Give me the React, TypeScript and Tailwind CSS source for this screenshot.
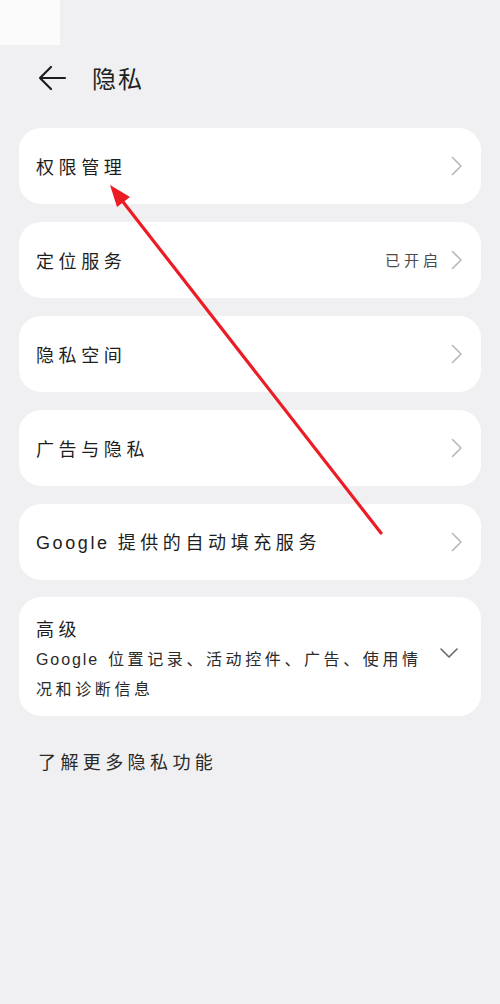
import React from "react";

const font = { fontFamily: '"Noto Sans CJK SC", "Noto Sans", sans-serif' };

function Chevron() {
  return (
    <svg width="13" height="20" viewBox="0 0 13 20" className="shrink-0">
      <path d="M2.5 1.5 L11 10 L2.5 18.5" fill="none" stroke="#b8b8b8" strokeWidth="1.6" strokeLinecap="round" strokeLinejoin="round" />
    </svg>
  );
}

function Row({ children, right }: { children: React.ReactNode; right?: React.ReactNode }) {
  return (
    <div className="h-[76px] bg-white rounded-[22px] flex items-center pl-[17px] pr-[18px]">
      <div className="flex-1 text-[18px] leading-[24px] tracking-[4.6px] text-[#1e1e1e] whitespace-nowrap">{children}</div>
      {right}
      <Chevron />
    </div>
  );
}

function G({ size }: { size: "lg" | "sm" }) {
  return (
    <span
      className={size === "lg" ? "tracking-[2.6px] mr-[8px]" : "tracking-[1.9px] mr-[9px]"}
      style={{ fontFamily: '"Liberation Sans", Arial, sans-serif' }}
    >
      Google
    </span>
  );
}

export default function App() {
  return (
    <div className="relative w-[500px] h-[1004px] bg-[#f0f0f2] overflow-hidden" style={font}>
      <div className="h-[45px]">
        <div className="w-[60px] h-[45px] bg-[#fbfbfb]" />
      </div>
      <div className="h-[83px] flex items-start pt-[13px]">
        <div className="h-[40px] flex items-center pl-[37px]">
          <svg width="30" height="28" viewBox="0 0 30 28">
            <path d="M28 14 H3 M14 3 L3 14 L14 25" fill="none" stroke="#1e1e1e" strokeWidth="2.2" strokeLinecap="round" strokeLinejoin="round" />
          </svg>
          <span className="ml-[25px] text-[24px] leading-[30px] tracking-[2px] text-[#1e1e1e]">隐私</span>
        </div>
      </div>

      <div className="mx-[19px] flex flex-col gap-[18px]">
        <Row>权限管理</Row>
        <Row right={<span className="text-[15px] tracking-[4px] text-[#4a4a4a] mr-[8px]">已开启</span>}>定位服务</Row>
        <Row>隐私空间</Row>
        <Row>广告与隐私</Row>
        <Row>
          <G size="lg" />
          提供的自动填充服务
        </Row>
        <div className="bg-white rounded-[22px] pl-[17px] pr-[22px] pt-[19px] pb-[14px] flex items-center -mt-[1px]">
          <div className="flex-1">
            <div className="text-[18px] leading-[24px] tracking-[4.6px] text-[#1e1e1e]">高级</div>
            <div className="mt-[4px] text-[16px] leading-[28px] tracking-[3.6px] text-[#2a2a2a] whitespace-nowrap">
              <div>
                <G size="sm" />
                位置记录、活动控件、广告、使用情
              </div>
              <div>况和诊断信息</div>
            </div>
          </div>
          <svg width="20" height="12" viewBox="0 0 20 12" className="shrink-0 -mt-[12px]">
            <path d="M2 2 L10 10 L18 2" fill="none" stroke="#666" strokeWidth="1.6" strokeLinecap="round" strokeLinejoin="round" />
          </svg>
        </div>
      </div>

      <div className="mt-[33px] pl-[38px] text-[18px] leading-[24px] tracking-[4.4px] text-[#2a2a2a]">了解更多隐私功能</div>

      <svg className="absolute left-0 top-0 pointer-events-none" width="500" height="1004" viewBox="0 0 500 1004">
        <line x1="381" y1="533" x2="120" y2="198" stroke="#ec1c24" strokeWidth="3.2" strokeLinecap="round" />
        <polygon points="110,185 117,207 130,197" fill="#ec1c24" />
      </svg>
    </div>
  );
}
